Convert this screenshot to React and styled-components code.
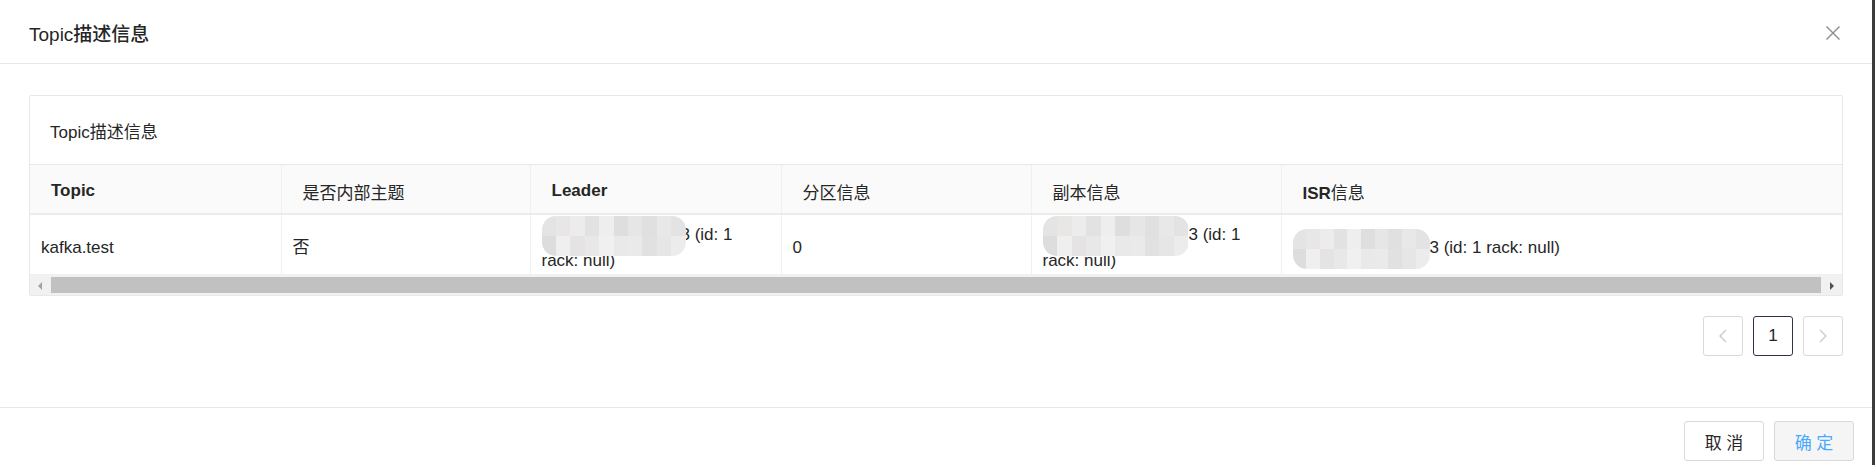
import React from 'react'
import styled, { createGlobalStyle } from 'styled-components'

const GlobalStyle = createGlobalStyle`
  html, body {
    margin: 0;
    padding: 0;
    background: #3d3d3d;
  }
  body {
    font-family: "Liberation Sans", "Noto Sans CJK SC", sans-serif;
    color: rgba(0, 0, 0, 0.85);
  }
`

// latin part of each title renders heavier than the CJK part, like in the original
const columns = [
    { key: 'topic', latin: 'Topic', cjk: '', width: 251 },
    { key: 'internal', latin: '', cjk: '是否内部主题', width: 249 },
    { key: 'leader', latin: 'Leader', cjk: '', width: 251 },
    { key: 'partition', latin: '', cjk: '分区信息', width: 250 },
    { key: 'replicas', latin: '', cjk: '副本信息', width: 250 },
    { key: 'isr', latin: 'ISR', cjk: '信息', width: 561 },
]

// pixelated redaction tones
const tones = [
    ['#e4e4e4', '#e9e6e6', '#ececec', '#e2e2e2', '#eeeeee', '#dedede', '#e6e6e6', '#e0e0e0', '#e8e8e8', '#e3e3e3'],
    ['#dddddd', '#efefef', '#e5e3e3', '#e8e8e8', '#f0f0f0', '#e9e9e9', '#eaeaea', '#e1e1e1', '#e6e6e6', '#ececec'],
]

export default function App() {
    return (
        <>
            <GlobalStyle />
            <Dialog>
                <Header>
                    <Title>Topic描述信息</Title>
                    <Close aria-label="close">
                        <svg width="16" height="16" viewBox="0 0 16 16">
                            <path d="M1.5 1.5 L14.5 14.5 M14.5 1.5 L1.5 14.5" stroke="#8c8c8c" strokeWidth="1.4" fill="none" />
                        </svg>
                    </Close>
                </Header>

                <Body>
                    <Card>
                        <CardHead>Topic描述信息</CardHead>
                        <Table>
                            <colgroup>
                                {columns.map(c => <col key={c.key} style={{ width: c.width }} />)}
                            </colgroup>
                            <thead>
                                <tr>
                                    {columns.map(c => (
                                        <Th key={c.key}>
                                            {c.latin && <Strong>{c.latin}</Strong>}
                                            {c.cjk}
                                        </Th>
                                    ))}
                                </tr>
                            </thead>
                            <tbody>
                                <tr>
                                    <Td>kafka.test</Td>
                                    <Td>否</Td>
                                    <Td>
                                        <Mosaic $w={144} $overlap={5} />3 (id: 1 rack: null)
                                    </Td>
                                    <Td>0</Td>
                                    <Td>
                                        <Mosaic $w={146} />3 (id: 1 rack: null)
                                    </Td>
                                    <Td>
                                        <Mosaic $w={137} />3 (id: 1 rack: null)
                                    </Td>
                                </tr>
                            </tbody>
                        </Table>
                        <ScrollBar>
                            <Arrow $dir="left" />
                            <Thumb />
                            <Arrow $dir="right" />
                        </ScrollBar>
                    </Card>

                    <Pager>
                        <PageItem $disabled>
                            <svg width="12" height="14" viewBox="0 0 12 14">
                                <path d="M9 1 L3 7 L9 13" stroke="#c8c8c8" strokeWidth="1.3" fill="none" />
                            </svg>
                        </PageItem>
                        <PageItem $active>1</PageItem>
                        <PageItem $disabled>
                            <svg width="12" height="14" viewBox="0 0 12 14">
                                <path d="M3 1 L9 7 L3 13" stroke="#c8c8c8" strokeWidth="1.3" fill="none" />
                            </svg>
                        </PageItem>
                    </Pager>
                </Body>

                <Footer>
                    <Button>取 消</Button>
                    <Button $primary>确 定</Button>
                </Footer>
            </Dialog>
        </>
    )
}

const MosaicBox = styled.span`
    position: relative;
    display: inline-block;
    vertical-align: top;
    width: ${p => p.$w}px;
    height: 26px;
    margin-right: ${p => -(p.$overlap || 0)}px;
    z-index: 1;
`

const MosaicTiles = styled.span`
    position: absolute;
    left: 0;
    right: 0;
    top: -6px;
    height: 40px;
    border-radius: 14px;
    overflow: hidden;
    display: grid;
    grid-template-rows: 20px 20px;
`

const MosaicRow = styled.span`
    display: flex;
`

const Tile = styled.span`
    flex: 1;
    background: ${p => p.$c};
`

const Mosaic = ({ $w, $overlap }) => (
    <MosaicBox $w={$w} $overlap={$overlap}>
        <MosaicTiles>
            {tones.map((row, i) => (
                <MosaicRow key={i}>
                    {row.map((c, j) => <Tile key={j} $c={c} />)}
                </MosaicRow>
            ))}
        </MosaicTiles>
    </MosaicBox>
)

const Dialog = styled.div`
    width: 1872px;
    height: 465px;
    background: #fff;
    display: flex;
    flex-direction: column;
    overflow: hidden;
`

const Header = styled.header`
    height: 63px;
    flex-shrink: 0;
    padding: 0 27px 0 29px;
    display: flex;
    align-items: center;
    justify-content: space-between;
    border-bottom: 1px solid #e8e8e8;
`

const Title = styled.div`
    font-size: 19px;
    font-weight: 500;
    color: #262626;
    padding-top: 2px;
`

const Close = styled.div`
    width: 24px;
    height: 24px;
    display: flex;
    align-items: center;
    justify-content: center;
    padding-top: 2px;
`

const Body = styled.section`
    height: 312px;
    flex-shrink: 0;
    padding: 31px 29px 0 29px;
`

const Card = styled.div`
    border: 1px solid #e8e8e8;
    border-radius: 2px;
    overflow: hidden;
`

const CardHead = styled.div`
    height: 68px;
    padding-left: 20px;
    display: flex;
    align-items: center;
    font-size: 17px;
    color: #262626;
    border-bottom: 1px solid #e8e8e8;
`

const Table = styled.table`
    width: 100%;
    table-layout: fixed;
    border-collapse: collapse;
    font-size: 17px;
`

const Th = styled.th`
    height: 44px;
    padding: 4px 10px 0 21px;
    text-align: left;
    font-weight: 400;
    color: #262626;
    background: #fafafa;
    border-bottom: 2px solid #ebebeb;
    border-right: 1px solid #f0f0f0;
    &:last-child { border-right: none; }
`

const Strong = styled.span`
    font-weight: 600;
`

const Td = styled.td`
    height: 52px;
    padding: 7px 10px 0 11px;
    line-height: 26px;
    color: #262626;
    vertical-align: middle;
    border-bottom: 1px solid #f0f0f0;
    border-right: 1px solid #f0f0f0;
    &:last-child { border-right: none; }
`

const ScrollBar = styled.div`
    height: 20px;
    background: #f1f1f1;
    display: flex;
    align-items: center;
`

const Arrow = styled.div`
    width: 21px;
    height: 20px;
    position: relative;
    flex-shrink: 0;
    &::after {
        content: '';
        position: absolute;
        top: 7px;
        ${p => p.$dir === 'left' ? 'left: 8px;' : 'right: 8px;'}
        border-top: 4px solid transparent;
        border-bottom: 4px solid transparent;
        ${p => p.$dir === 'left'
        ? 'border-right: 4px solid #a3a3a3;'
        : 'border-left: 4px solid #505050;'}
    }
`

const Thumb = styled.div`
    flex: 1;
    height: 16px;
    background: #c1c1c1;
`

const Pager = styled.div`
    margin-top: 20px;
    display: flex;
    justify-content: flex-end;
    gap: 10px;
`

const PageItem = styled.div`
    width: 40px;
    height: 40px;
    box-sizing: border-box;
    border: 1px solid ${p => p.$active ? '#2b3350' : '#d9d9d9'};
    border-radius: 3px;
    display: flex;
    align-items: center;
    justify-content: center;
    font-size: 17px;
    color: #262626;
`

const Footer = styled.footer`
    flex: 1;
    border-top: 1px solid #e8e8e8;
    padding: 13px 18px 0 0;
    display: flex;
    justify-content: flex-end;
    align-items: flex-start;
    gap: 10px;
`

const Button = styled.div`
    width: 80px;
    height: 40px;
    box-sizing: border-box;
    border: 1px solid #d9d9d9;
    border-radius: 3px;
    background: ${p => p.$primary ? '#f5f5f5' : '#fff'};
    color: ${p => p.$primary ? '#4aa8ff' : '#262626'};
    display: flex;
    align-items: center;
    justify-content: center;
    font-size: 17px;
    white-space: pre;
`
